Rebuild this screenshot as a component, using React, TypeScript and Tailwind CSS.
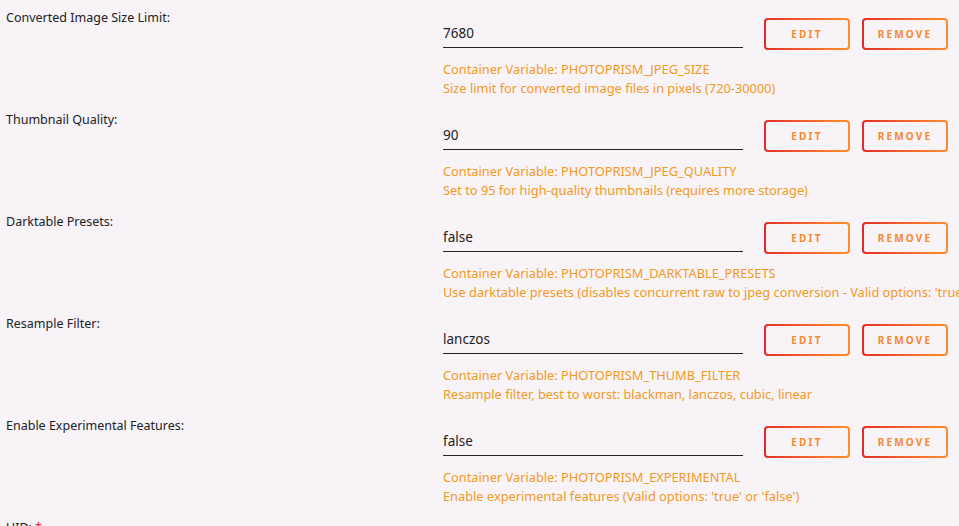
import React from "react";

type Setting = {
  label: string;
  value: string;
  variable: string;
  help: string;
};

const settings: Setting[] = [
  {
    label: "Converted Image Size Limit:",
    value: "7680",
    variable: "PHOTOPRISM_JPEG_SIZE",
    help: "Size limit for converted image files in pixels (720-30000)",
  },
  {
    label: "Thumbnail Quality:",
    value: "90",
    variable: "PHOTOPRISM_JPEG_QUALITY",
    help: "Set to 95 for high-quality thumbnails (requires more storage)",
  },
  {
    label: "Darktable Presets:",
    value: "false",
    variable: "PHOTOPRISM_DARKTABLE_PRESETS",
    help: "Use darktable presets (disables concurrent raw to jpeg conversion - Valid options: 'true' or 'false')",
  },
  {
    label: "Resample Filter:",
    value: "lanczos",
    variable: "PHOTOPRISM_THUMB_FILTER",
    help: "Resample filter, best to worst: blackman, lanczos, cubic, linear",
  },
  {
    label: "Enable Experimental Features:",
    value: "false",
    variable: "PHOTOPRISM_EXPERIMENTAL",
    help: "Enable experimental features (Valid options: 'true' or 'false')",
  },
];

const GradientButton = ({ children }: { children: string }) => (
  <div className="h-[32px] w-[86px] rounded-[4px] bg-gradient-to-r from-[#e22828] to-[#ff8c2f] p-[2px]">
    <div className="flex h-full w-full items-center justify-center rounded-[2px] bg-[#f7f3f7] text-[10px] font-bold uppercase tracking-[2.2px] text-[#f5892c]">
      {children}
    </div>
  </div>
);

const SettingRow = ({ s }: { s: Setting }) => (
  <div className="flex h-[102px]">
    <div className="w-[443px] shrink-0 pl-[6px] pt-[10px] text-[12.5px] leading-[16px] text-[#222]">{s.label}</div>
    <div className="flex flex-col pt-[18px]">
      <div className="flex items-start">
        <div className="flex h-[30px] w-[300px] items-center pt-[2px] border-b-[1.5px] border-[#222] text-[13.5px] text-[#222]">
          {s.value}
        </div>
        <div className="ml-[21px]">
          <GradientButton>Edit</GradientButton>
        </div>
        <div className="ml-[12px]">
          <GradientButton>Remove</GradientButton>
        </div>
      </div>
      <div className="mt-[10px] whitespace-nowrap text-[12.8px] leading-[19px] text-[#f29a1f]">
        <div>Container Variable: {s.variable}</div>
        <div>{s.help}</div>
      </div>
    </div>
  </div>
);

export default function App() {
  return (
    <div className="h-[526px] w-[959px] overflow-hidden bg-[#f7f3f7] font-['Noto_Sans',sans-serif]">
      {settings.map((s) => (
        <SettingRow key={s.variable} s={s} />
      ))}
      <div className="pl-[6px] pt-[10px] text-[12.5px] leading-[16px] text-[#222]">
        UID: <span className="text-[#e22828]">*</span>
      </div>
    </div>
  );
}
